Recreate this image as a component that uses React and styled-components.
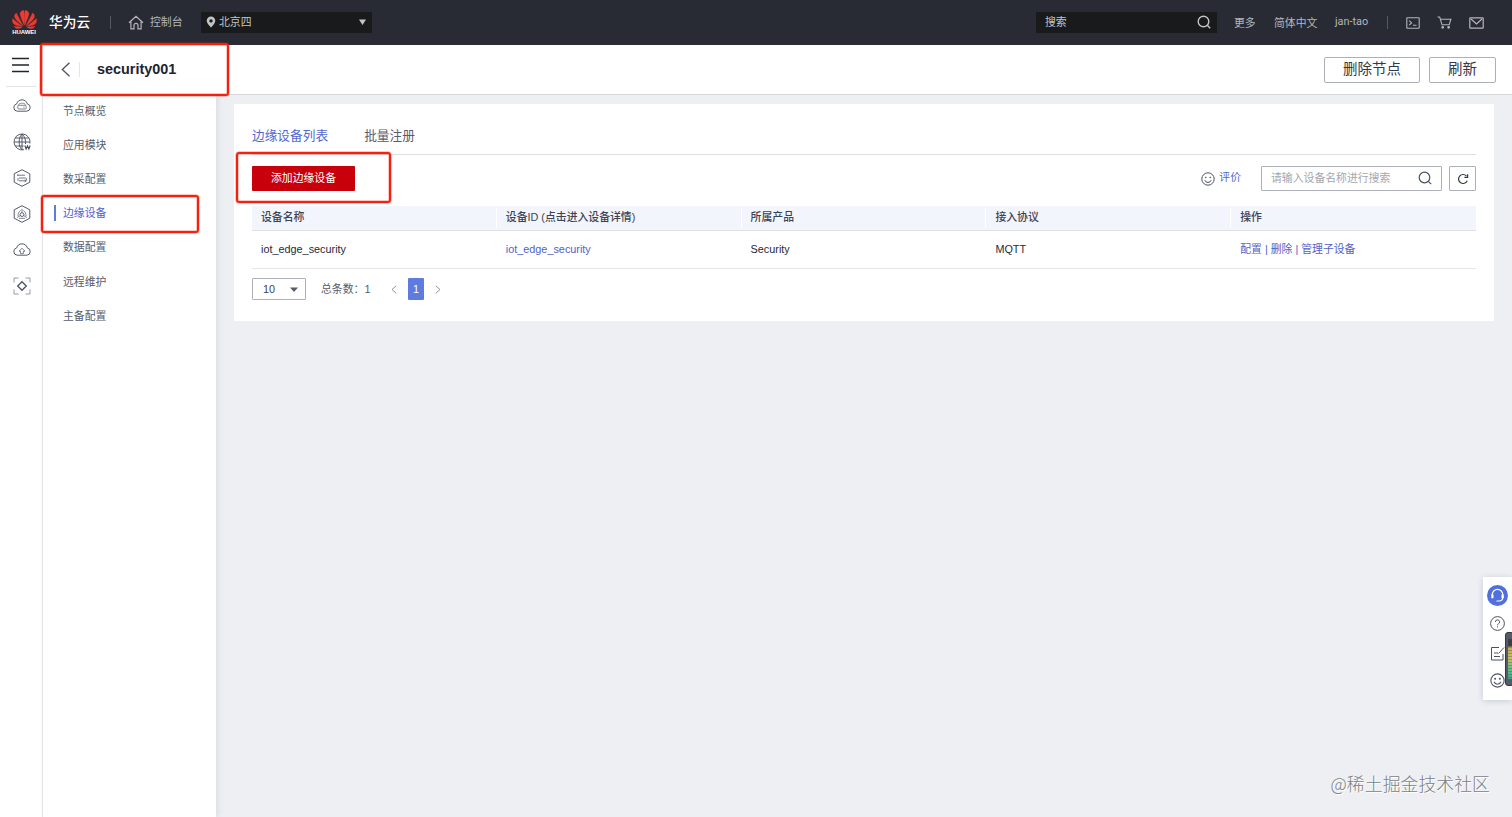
import React from "react";
import styled, { createGlobalStyle, css } from "styled-components";

const Global = createGlobalStyle`
  *, *::before, *::after { box-sizing: border-box; }
  body {
    margin: 0;
    overflow: hidden;
    background: #edeff3;
    color: #252b3a;
    font-family: "Liberation Sans", "Noto Sans CJK SC", sans-serif;
    font-size: 10.85px;
    line-height: 16px;
  }
  button { font-family: inherit; margin: 0; padding: 0; cursor: pointer; }
  a { color: inherit; text-decoration: none; }
  svg { display: block; flex: none; }
`;

const Page = styled.div`
  position: relative;
  width: 100%;
  height: 817px;
  display: flex;
  flex-direction: column;
  overflow: hidden;
`;

/* Red frame laid over the part it points out */
const Highlight = styled.span`
  position: absolute;
  z-index: 5;
  top: ${(p) => p.$top}px;
  left: ${(p) => p.$left}px;
  width: ${(p) => p.$width}px;
  height: ${(p) => p.$height}px;
  border: 2px solid #f5200d;
  border-radius: 3px;
  box-shadow: 0 0 0 0.5px rgba(245, 32, 13, 0.5), inset 0 0 0 0.5px rgba(245, 32, 13, 0.5);
  pointer-events: none;
`;

/* ---------- top bar ---------- */
const TopBar = styled.header`
  flex: none;
  height: 45px;
  padding: 0 28px 0 11px;
  display: flex;
  align-items: center;
  background: #282b33;
  color: #b4b6bb;
`;
const Logo = styled.div`
  width: 26px;
  display: flex;
  flex-direction: column;
  align-items: center;
`;
const LogoName = styled.span`
  font-size: 6px;
  line-height: 7px;
  font-weight: 700;
  color: #fff;
  letter-spacing: -0.1px;
`;
const Brand = styled.span`
  width: 61px;
  margin-left: 12px;
  font-size: 13.7px;
  font-weight: 500;
  line-height: 20px;
  color: #fff;
`;
const Divider = styled.i`
  width: 1px;
  height: 13px;
  background: #565960;
`;
const HomeLink = styled.a`
  display: flex;
  align-items: center;
  width: 73px;
  gap: 6px;
  margin-left: 17px;
`;
const HomeText = styled.span`
  padding-bottom: 1px;
`;
const Region = styled.div`
  width: 171px;
  height: 21px;
  padding: 0 6px 1px 5px;
  display: flex;
  align-items: center;
  gap: 3px;
  background: #181a1b;
  color: #c3c4c6;
`;
const Grow = styled.span`flex: 1;`;
const TopSearch = styled.div`
  width: 181px;
  height: 21px;
  margin-right: 17px;
  padding: 0 6px 1px 9px;
  display: flex;
  align-items: center;
  justify-content: space-between;
  background: #181a1b;
  color: #c3c4c6;
`;
const TopLink = styled.a`
  width: ${(p) => p.$width}px;
  white-space: nowrap;
  font-family: Roboto, "Noto Sans CJK SC", sans-serif;
  padding-top: ${(p) => p.$drop || 0}px;
  padding-bottom: ${(p) => p.$lift || 0}px;
`;
const TopIcons = styled.div`
  display: flex;
  align-items: center;
  gap: 17px;
  margin-left: 18px;
`;

/* ---------- frame ---------- */
const Frame = styled.div`
  flex: 1;
  min-height: 0;
  display: flex;
`;
const Rail = styled.nav`
  flex: none;
  width: 43px;
  display: flex;
  flex-direction: column;
  align-items: center;
  background: #fff;
  border-right: 1px solid #e3e5ea;
`;
const MenuToggle = styled.div`
  width: 30px;
  height: 42px;
  margin-bottom: 1px;
  padding: 12px 6px 0;
  border-bottom: 1px solid #e4e4e6;
`;
const RailItem = styled.a`
  height: 36px;
  display: flex;
  align-items: center;
  margin-left: 2px;
`;
const Main = styled.div`
  flex: 1;
  min-width: 0;
  display: flex;
  flex-direction: column;
`;
const TitleBar = styled.div`
  position: relative;
  flex: none;
  height: 50px;
  padding: 0 16px 0 17px;
  display: flex;
  align-items: center;
  gap: 9px;
  background: #fff;
  border-bottom: 1px solid #d7d8db;
`;
const BackCell = styled.div`
  width: 20px;
  height: 15px;
  border-right: 1px solid #e4e5e8;
`;
const Title = styled.h1`
  flex: 1;
  margin: 0 0 0 8px;
  padding-bottom: 2px;
  font-size: 14.4px;
  line-height: 20px;
  font-weight: 700;
  color: #20242e;
`;
const OutlineButton = styled.button`
  width: ${(p) => p.$width}px;
  height: 26px;
  padding-bottom: 2px;
  border: 1px solid #adb0b8;
  border-radius: 2px;
  background: #fff;
  color: #33384a;
  font-size: 14.5px;
  line-height: 22px;
`;
const Body = styled.div`
  flex: 1;
  min-height: 0;
  display: flex;
`;
const Sidebar = styled.nav`
  position: relative;
  flex: none;
  width: 173px;
  background: #fff;
  box-shadow: 2px 0 5px rgba(60, 70, 100, 0.1);
`;
const SideItem = styled.a`
  height: 34.2px;
  padding: 0 0 3px 11px;
  display: flex;
  align-items: center;
  color: #575d6c;
  &::before {
    content: "";
    width: 2px;
    height: 16px;
    margin-right: 7px;
    background: ${(p) => (p.$active ? "#5e7ce0" : "transparent")};
  }
  ${(p) => p.$active && css`color: #4f62cc;`}
`;

/* ---------- content card ---------- */
const Content = styled.main`
  flex: 1;
  padding: 9px 18px 0;
`;
const Card = styled.section`
  position: relative;
  height: 217px;
  padding: 0 18px;
  background: #fff;
  border-radius: 1px;
`;
const Tabs = styled.div`
  height: 51px;
  padding-top: 13px;
  display: flex;
  align-items: center;
  gap: 36px;
  border-bottom: 1px solid #dcdee2;
  font-size: 12.7px;
`;
const Tab = styled.a`
  color: ${(p) => (p.$active ? "#5468cf" : "#575d6c")};
`;
const Toolbar = styled.div`
  height: 51px;
  padding-bottom: 4px;
  display: flex;
  align-items: center;
`;
const PrimaryButton = styled.button`
  width: 103px;
  height: 25px;
  padding-bottom: 2px;
  border: 0;
  border-radius: 1px;
  background: #c7000b;
  color: #fff;
  font-size: 10.85px;
  line-height: 16px;
`;
const RateLink = styled.a`
  display: flex;
  align-items: center;
  gap: 4px;
  margin-right: 20px;
  color: #5468cf;
`;
const RateText = styled.span`
  padding-bottom: 3px;
`;
const SearchBox = styled.div`
  width: 181px;
  height: 25px;
  padding: 0 9px 1px;
  display: flex;
  align-items: center;
  justify-content: space-between;
  border: 1px solid #adb0b8;
  border-radius: 1px;
  color: #a4a7af;
`;
const SquareButton = styled.button`
  width: 27px;
  height: 25px;
  margin-left: 7px;
  display: flex;
  align-items: center;
  justify-content: center;
  border: 1px solid #adb0b8;
  border-radius: 1px;
  background: #fff;
`;
const Row = styled.div`
  display: grid;
  grid-template-columns: repeat(5, 1fr);
  align-items: center;
  ${(p) =>
    p.$head
      ? css`
          height: 25px;
          background: #f2f5fc;
          border-bottom: 1px solid #dfe1e6;
          color: #3d4354;
          font-weight: 500;
        `
      : css`
          height: 38px;
          padding-bottom: 2px;
          border-bottom: 1px solid #e3e5e9;
          color: #252b3a;
        `}
`;
const Cell = styled.div`
  padding-left: 9px;
  white-space: nowrap;
  color: ${(p) => (p.$link ? "#5262c6" : "inherit")};
  ${(p) =>
    p.$head &&
    css`
      height: 20px;
      line-height: 19px;
      & + & { box-shadow: -1px 0 #fff; }
    `}
`;
const Pager = styled.div`
  padding-top: 9px;
  display: flex;
  align-items: center;
  color: #575d6c;
`;
const PageSize = styled.div`
  width: 54px;
  height: 22px;
  padding: 0 7px 0 10px;
  display: flex;
  align-items: center;
  justify-content: space-between;
  border: 1px solid #adb0b8;
  border-radius: 1px;
  color: #3d4354;
`;
const Total = styled.span`
  width: 50px;
  margin: 0 20px 0 15px;
  white-space: nowrap;
`;
const PageNumber = styled.span`
  width: 16px;
  height: 22px;
  margin: 0 11px;
  border-radius: 1px;
  background: #5e7ce0;
  color: #fff;
  line-height: 22px;
  text-align: center;
`;

/* ---------- floating parts ---------- */
const FloatPanel = styled.aside`
  position: absolute;
  right: 0;
  top: 577px;
  width: 29px;
  height: 123px;
  padding: 8px 0 0 4px;
  display: flex;
  flex-direction: column;
  background: #fff;
  box-shadow: 0 1px 6px rgba(40, 50, 80, 0.18);
`;
const HelpItem = styled.a`
  height: ${(p) => p.$height}px;
  display: flex;
  align-items: flex-start;
  margin-left: ${(p) => p.$indent || 0}px;
`;
const Meter = styled.div`
  position: absolute;
  right: -2px;
  top: 632px;
  width: 9px;
  height: 54px;
  padding: 6px 0 6px 2px;
  border: 1px solid #343843;
  border-radius: 3px;
  background: #555a66;
`;
const MeterFill = styled.div`
  height: 100%;
  background:
    repeating-linear-gradient(transparent 0 2px, rgba(50, 55, 60, 0.3) 2px 3px),
    linear-gradient(#3b3f49 18%, #c9a95a 20%, #c4c060 50%, #62c088 75%, #3fa88a);
`;
const Watermark = styled.div`
  position: absolute;
  right: 22px;
  top: 771px;
  font-size: 17.9px;
  font-weight: 300;
  line-height: 24px;
  color: #7c7f86;
  font-family: "Noto Sans CJK SC", sans-serif;
  text-shadow: 1px 1px #fff;
`;

/* ---------- drawings ---------- */
const Svg = ({ w, h, box, stroke = "#4c5262", sw = 1, children }) => (
  <svg width={w} height={h} viewBox={box || `0 0 ${w} ${h}`} fill="none" stroke={stroke} strokeWidth={sw}>
    {children}
  </svg>
);
const HuaweiFlower = () => (
  <svg width="25" height="19" viewBox="0 0 25 19" fill="#ee3a30" stroke="#ee3a30" strokeWidth=".3">
    <path d="M12.200 15.200C10.600 11.500 7.800 5.200 8.100 3.200 8.400 1.200 10.500.300 11.800.200 12.600 3.500 12.600 10 12.200 15.200Z" />
    <path d="M12.800 15.200C14.400 11.500 17.200 5.200 16.900 3.200 16.600 1.200 14.500.300 13.200.200 12.400 3.500 12.400 10 12.800 15.200Z" />
    <path d="M11.200 15.700C8.800 11.500 6 6 4.400 2.900 2.500 4.100 2 6.200 3 8 4.400 10.600 8 13.600 11.200 15.700Z" />
    <path d="M13.800 15.700C16.200 11.500 19 6 20.600 2.900 22.500 4.100 23 6.200 22 8 20.600 10.600 17 13.600 13.800 15.700Z" />
    <path d="M10.500 16.300C7 14 3.400 11 .700 8.500-.100 11 .500 13.300 2.600 14.600 4.600 15.800 8 16.300 10.500 16.300Z" />
    <path d="M14.500 16.300C18 14 21.600 11 24.300 8.500 25.100 11 24.500 13.300 22.400 14.600 20.400 15.800 17 16.300 14.500 16.300Z" />
    <path d="M10.300 16.900C7.500 16.900 4.500 16.700 2 16.100 3 18.200 5 19 6.800 18.500 8 18.200 9.400 17.500 10.300 16.900Z" />
    <path d="M14.700 16.900C17.500 16.900 20.500 16.700 23 16.100 22 18.200 20 19 18.200 18.500 17 18.200 15.600 17.500 14.700 16.900Z" />
  </svg>
);
const HomeIcon = () => (
  <Svg w={16} h={15} stroke="#b4b6bb" sw={1.2}>
    <path d="M1 7.800 8 1.200 15 7.800M2.900 6.200V13.900H6V10.400A2 2 0 0 1 10 10.400V13.900H13.100V6.200" />
  </Svg>
);
const PinIcon = () => (
  <svg width="10" height="12" viewBox="0 0 10 12" fill="#c3c4c6">
    <path fillRule="evenodd" d="M5 .500A4.300 4.300 0 0 0 .700 4.800C.700 7.300 3.200 9.600 5 11.600 6.800 9.600 9.300 7.300 9.300 4.800A4.300 4.300 0 0 0 5 .500ZM5 3.200A1.700 1.700 0 1 1 5 6.600 1.700 1.700 0 0 1 5 3.200Z" />
  </svg>
);
const Caret = ({ fill, w = 7, h = 6 }) => (
  <svg width={w} height={h} viewBox="0 0 7 6" preserveAspectRatio="none" fill={fill}><path d="M0 .500H7L3.500 6Z" /></svg>
);
const SearchIcon = ({ stroke = "#4c5262", sw = 1.2 }) => (
  <Svg w={14} h={14} stroke={stroke} sw={sw}>
    <circle cx="6.500" cy="6.500" r="5.300" /><path d="M10.300 10.300 13.200 13.200" />
  </Svg>
);
const TerminalIcon = () => (
  <Svg w={14} h={12} stroke="#b4b6bb" sw={1.1}>
    <rect x=".8" y=".8" width="12.400" height="10.400" rx=".5" /><path d="M3.200 3.700 5.600 5.900 3.200 8.100M6.900 8.300H10.500" />
  </Svg>
);
const CartIcon = () => (
  <Svg w={15} h={13} stroke="#b4b6bb" sw={1.1}>
    <path d="M.500 1H2.700L5 8.800H12.200L13.900 3.200H3.400" /><circle cx="5.700" cy="11.300" r=".8" fill="#b4b6bb" /><circle cx="11.600" cy="11.300" r=".8" fill="#b4b6bb" />
  </Svg>
);
const MailIcon = () => (
  <Svg w={15} h={12} stroke="#b4b6bb" sw={1.2}>
    <rect x=".8" y=".8" width="13.400" height="10.400" rx=".5" /><path d="M2 2 7.500 7 13 2" />
  </Svg>
);
const cloud = "M4.200 14.200H13.800A3.700 3.700 0 0 0 14.300 6.900 5.500 5.500 0 0 0 3.700 6.900 3.700 3.700 0 0 0 4.200 14.200Z";
const hexagon = "M9 .700 16.800 4.800V13.200L9 17.300 1.200 13.200V4.800Z";
const railIcons = [
  <><path d={cloud} /><rect x="4.800" y="8.300" width="8.400" height="3.700" rx="1" strokeWidth=".7" /><path d="M5.500 8.300 6.700 6.300H11.300L12.500 8.300M10.300 10.200H11.600" strokeWidth=".6" /></>,
  <><path d="M16.900 10.500A8 8 0 1 0 11 16.700M9 1C5.200 4.500 5.200 13.500 9 16.900M9 1C12 3.800 12.900 7.500 12.500 11M9 1V17M1.200 9H16.800M2.400 5H15.600M2.400 13H10.500" strokeWidth=".95" /><path d="M11.900 12.500 13.100 16 14.500 13 15.900 16 17.100 12.500" strokeWidth="1.200" /></>,
  <><path d={hexagon} /><path d="M5 6.200H12M6 9H11.500A1.400 1.400 0 0 1 12.800 11.800H6M4.700 5.200V7.200M5 9V11.800M11.700 10.700 13.200 11.800 11.700 12.900" strokeWidth=".8" /></>,
  <><path d={hexagon} /><circle cx="9" cy="9.600" r="1.900" strokeWidth=".9" /><path d="M9 3.700V7.700M7.300 10.600 4 12.600M10.700 10.600 14 12.600M7.700 5.400C5.800 6.600 4.800 8.800 5 11M10.300 5.400C12.200 6.600 13.200 8.800 13 11M6 13.300H12" strokeWidth=".7" /></>,
  <><path d={cloud} /><path d="M9 7.300 6 10.200H7.600V12.600H10.400V10.200H12Z" strokeWidth=".7" /></>,
  <><path d="M1 5.500V1H5.500M12.500 1H17V5.500M17 12.500V17H12.500M5.500 17H1V12.500" stroke="#8f939d" /><path d="M9 4.700 13.300 9 9 13.300 4.700 9Z" strokeWidth="1.300" /></>,
];
const SmileIcon = ({ size = 14 }) => (
  <Svg w={size} h={size} box="0 0 14 14">
    <circle cx="7" cy="7" r="6.200" /><circle cx="4.800" cy="5.400" r=".4" fill="#4c5262" /><circle cx="9.200" cy="5.400" r=".4" fill="#4c5262" /><path d="M3.800 8.200A3.400 3.400 0 0 0 10.200 8.200" />
  </Svg>
);
const RefreshIcon = () => (
  <Svg w={12} h={12} sw={1.2} stroke="#33384a">
    <path d="M10.200 7.700A4.500 4.500 0 1 1 9.500 3.100" /><path d="M10.600 1.200V4.300H7.400" />
  </Svg>
);
const Chevron = ({ right }) => (
  <Svg w={6} h={9} stroke="#8d919b"><path d={right ? "M.8 .8 5 4.500 .8 8.200" : "M5.200 .8 1 4.500 5.200 8.200"} /></Svg>
);

const sideItems = ["节点概览", "应用模块", "数采配置", "边缘设备", "数据配置", "远程维护", "主备配置"];
const columns = ["设备名称", "设备ID (点击进入设备详情)", "所属产品", "接入协议", "操作"];

export default function App() {
  return (
    <Page>
      <Global />
      <TopBar>
        <Logo><HuaweiFlower /><LogoName>HUAWEI</LogoName></Logo>
        <Brand>华为云</Brand>
        <Divider />
        <HomeLink><HomeIcon /><HomeText>控制台</HomeText></HomeLink>
        <Region><PinIcon />北京四<Grow /><Caret fill="#c3c4c6" /></Region>
        <Grow />
        <TopSearch>搜索<SearchIcon stroke="#c3c4c6" sw={1.4} /></TopSearch>
        <TopLink $width={40} $drop={2}>更多</TopLink>
        <TopLink $width={61} $drop={2}>简体中文</TopLink>
        <TopLink $width={52} $lift={1}>jan-tao</TopLink>
        <Divider />
        <TopIcons><TerminalIcon /><CartIcon /><MailIcon /></TopIcons>
      </TopBar>
      <Frame>
        <Rail>
          <MenuToggle>
            <Svg w={17} h={16} stroke="#20242e" sw={1.4}><path d="M0 1.500H17M0 8H17M0 14.500H17" /></Svg>
          </MenuToggle>
          {railIcons.map((icon, i) => (
            <RailItem key={i}><Svg w={18} h={18} sw={0.95}>{icon}</Svg></RailItem>
          ))}
        </Rail>
        <Main>
          <TitleBar>
            <BackCell><Svg w={11} h={15} sw={1.3}><path d="M9.500 .700 2.300 7.500 9.500 14.300" /></Svg></BackCell>
            <Title>security001</Title>
            <OutlineButton $width={96}>删除节点</OutlineButton>
            <OutlineButton $width={67}>刷新</OutlineButton>
            <Highlight $top={-2} $left={-3} $width={189} $height={53} />
          </TitleBar>
          <Body>
            <Sidebar>
              {sideItems.map((name) => (
                <SideItem key={name} $active={name === "边缘设备"}>{name}</SideItem>
              ))}
              <Highlight $top={100} $left={-2} $width={158} $height={38} />
            </Sidebar>
            <Content>
              <Card>
                <Tabs><Tab $active>边缘设备列表</Tab><Tab>批量注册</Tab></Tabs>
                <Toolbar>
                  <PrimaryButton>添加边缘设备</PrimaryButton>
                  <Grow />
                  <RateLink><SmileIcon /><RateText>评价</RateText></RateLink>
                  <SearchBox>请输入设备名称进行搜索<SearchIcon /></SearchBox>
                  <SquareButton><RefreshIcon /></SquareButton>
                </Toolbar>
                <Row $head>{columns.map((c) => <Cell key={c} $head>{c}</Cell>)}</Row>
                <Row>
                  <Cell>iot_edge_security</Cell>
                  <Cell $link>iot_edge_security</Cell>
                  <Cell>Security</Cell>
                  <Cell>MQTT</Cell>
                  <Cell $link>配置 | 删除 | 管理子设备</Cell>
                </Row>
                <Pager>
                  <PageSize>10<Caret fill="#575d6c" w={8} h={5} /></PageSize>
                  <Total>总条数：1</Total>
                  <Chevron />
                  <PageNumber>1</PageNumber>
                  <Chevron right />
                </Pager>
                <Highlight $top={48} $left={2} $width={155} $height={51} />
              </Card>
            </Content>
          </Body>
        </Main>
      </Frame>
      <FloatPanel>
        <HelpItem $height={31}>
          <Svg w={21} h={21} stroke="#fff" sw={1.2}>
            <circle cx="10.500" cy="10.500" r="10.500" fill="#5170dc" stroke="none" />
            <path d="M5.200 10.500V9.700A5.300 5.300 0 0 1 15.800 9.700V12.500A3.500 3.500 0 0 1 12 16H9.500" />
            <path d="M5.400 9.500V13.200M15.600 9.500V13.200" strokeWidth="2.200" />
          </Svg>
        </HelpItem>
        <HelpItem $height={30} $indent={3}>
          <Svg w={15} h={15}>
            <circle cx="7.500" cy="7.500" r="6.900" /><path d="M5.400 6A2.100 2.100 0 1 1 8.300 7.900Q7.500 8.300 7.500 9.300M7.500 10.300V11.400" />
          </Svg>
        </HelpItem>
        <HelpItem $height={27} $indent={3}>
          <Svg w={15} h={15}>
            <path d="M9 1.500H1.500V14H13V8M4 7H8M4 10.500H10M8.500 7.500 14 1.500" />
          </Svg>
        </HelpItem>
        <HelpItem $height={15} $indent={3}><SmileIcon size={15} /></HelpItem>
      </FloatPanel>
      <Meter><MeterFill /></Meter>
      <Watermark>@稀土掘金技术社区</Watermark>
    </Page>
  );
}
